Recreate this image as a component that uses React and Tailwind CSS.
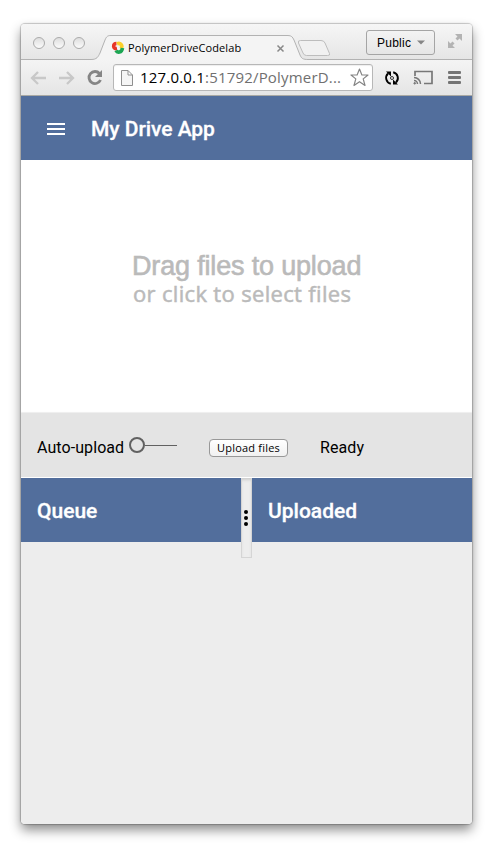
import React from "react";

function TabStrip() {
  return (
    <div className="relative h-9 shrink-0 bg-gradient-to-b from-[#f6f6f6] to-[#e5e5e5]">
      <svg className="absolute left-0 top-0" width="451" height="36" viewBox="0 0 451 36" fill="none">
        <path d="M0 35.5H70C76 35.5 77 33 79 29L84 16C85.500 12.500 86.500 11.500 90 11.500H267C270.500 11.500 271.500 13 273 16L279 31C280.500 34.500 282 35.500 287 35.500H451V36H0Z" fill="#f4f4f4" />
        <path d="M0 35.5H70C76 35.5 77 33 79 29L84 16C85.500 12.500 86.500 11.500 90 11.500H267C270.500 11.500 271.500 13 273 16L279 31C280.500 34.500 282 35.500 287 35.500H451" stroke="#b2b2b2" />
        <path d="M279.500 16.500H300Q303 16.500 304 19L308.500 29.500Q309.500 31.500 306.500 31.500H285.500Q283 31.500 282 29L277.500 19Q276.500 16.500 279.500 16.500Z" fill="#f1f1f1" stroke="#bdbdbd" />
      </svg>
      <div className="relative flex h-9 items-center">
        <div className="ml-3 mt-0.5 flex gap-2">
          <i className="h-3 w-3 rounded-full border border-[#aaa] bg-gradient-to-b from-[#dedede] to-[#fbfbfb]" />
          <i className="h-3 w-3 rounded-full border border-[#aaa] bg-gradient-to-b from-[#dedede] to-[#fbfbfb]" />
          <i className="h-3 w-3 rounded-full border border-[#aaa] bg-gradient-to-b from-[#dedede] to-[#fbfbfb]" />
        </div>
        <svg className="ml-[26px] mt-3 shrink-0" width="14" height="14" viewBox="0 0 14 14" fill="none" strokeWidth="3.600">
          <path d="M5.500 2.500Q2.500 2.500 2.700 5.500Q3 8 6 7.500" stroke="#e73527" />
          <path d="M6 2.800Q9 1.500 10.500 4Q11.500 6 9.500 7.500" stroke="#fbd02c" />
          <path d="M11.500 7Q11 10.500 8.500 11Q6 11.500 5 9.500" stroke="#1ca653" />
        </svg>
        <span className="ml-[3px] mt-3 w-[148px] whitespace-nowrap font-['Open_Sans',sans-serif] text-[11px] font-medium leading-4 tracking-[0.1px] text-black">PolymerDriveCodelab</span>
        <svg className="mt-3 shrink-0" width="9" height="9" viewBox="0 0 9 9"><path d="M1.500 1.500L7.500 7.500M7.500 1.500L1.500 7.500" stroke="#888" strokeWidth="1.500" /></svg>
        <div className="ml-[81px] flex h-[25px] w-[69px] items-center rounded-[3px] border border-[#a5a5a5] bg-gradient-to-b from-[#f3f3f3] to-[#e6e6e6] pl-[10px]">
          <span className="mt-px w-[35px] font-['Liberation_Sans',Arial,sans-serif] text-[12px] leading-4 tracking-[0.25px] text-black">Public</span>
          <svg className="ml-[5px]" width="8" height="5" viewBox="0 0 8 5"><path d="M0 .5H8L4 4.500Z" fill="#858585" /></svg>
        </div>
        <svg className="ml-[12px] -mt-0.5" width="16" height="16" viewBox="0 0 16 16" fill="#b3b3b3">
          <path d="M8 1H15V8L12.500 5.500L10.500 7.500L8.500 5.500L10.500 3.500ZM1 8L3.500 10.500L5.500 8.500L7.500 10.500L5.500 12.500L8 15H1Z" />
        </svg>
      </div>
    </div>
  );
}

function Toolbar() {
  return (
    <div className="flex h-9 shrink-0 items-center border-b border-[#a9a9a4] bg-gradient-to-b from-[#f4f4f4] to-[#e5e5e5]">
      <svg className="ml-[9px] shrink-0" width="75" height="20" viewBox="0 0 75 20" fill="none">
        <path d="M8 4L2 10L8 16M3 10H16" stroke="#c8c8c8" strokeWidth="2.300" />
        <path d="M37 4L43 10L37 16M42 10H29" stroke="#c8c8c8" strokeWidth="2.300" />
        <path d="M69.500 5.500A6 6 0 1 0 70.500 12" stroke="#858585" strokeWidth="2.800" />
        <path d="M72 2V9H65Z" fill="#858585" />
      </svg>
      <div className="ml-[8px] flex h-[27px] w-[260px] shrink-0 items-center rounded-[3px] border border-[#b7b7b7] bg-white shadow-[inset_0_1px_1px_#eee]">
        <svg className="ml-[7px] shrink-0" width="12" height="16" viewBox="0 0 12 16" fill="none">
          <path d="M.5 .5H7L11.500 5V15.500H.5ZM7 .5V5H11.500" fill="#f5f5f5" stroke="#8f8f8f" />
        </svg>
        <span className="-mt-px ml-[7px] w-[208px] whitespace-nowrap font-['Open_Sans',sans-serif] text-[15px] leading-5 tracking-[0.19px] text-[#707070]"><span className="text-black">127.0.0.1</span>:51792/PolymerD...</span>
        <svg className="ml-[2px] shrink-0" width="19" height="19" viewBox="0 0 19 19" fill="white">
          <path d="M9.500 1L11.900 7H18L13.200 10.900L15 17.500L9.500 13.700L4 17.500L5.800 10.900L1 7H7.100Z" stroke="#858585" strokeWidth="1.200" strokeLinejoin="round" />
        </svg>
      </div>
      <svg className="ml-[11px] shrink-0" width="16" height="16" viewBox="0 0 16 16" fill="none">
        <path d="M6.800 13.700A6 6 0 0 1 4 3.500M9.200 2.300A6 6 0 0 1 12 12.500" stroke="#000" strokeWidth="1.900" />
        <path d="M2 1.500H7V6.500ZM9 9.500V14.500H14Z" fill="#000" />
        <circle cx="8" cy="8" r="1.500" stroke="#333" />
      </svg>
      <svg className="ml-[13px] shrink-0" width="21" height="17" viewBox="0 0 21 17" fill="none" stroke="#777">
        <path d="M2 7V2.500H19V14.500H11" strokeWidth="1.700" />
        <path d="M1 8.500A6.500 6.500 0 0 1 7.500 15M1 11.500A3.500 3.500 0 0 1 4.500 15" strokeWidth="1.500" />
        <circle cx="1.700" cy="14.300" r=".8" fill="#777" />
      </svg>
      <div className="ml-[14px] flex flex-col gap-[2px]">
        <i className="h-[3px] w-[13px] rounded-[1px] bg-[#747474]" />
        <i className="h-[3px] w-[13px] rounded-[1px] bg-[#747474]" />
        <i className="h-[3px] w-[13px] rounded-[1px] bg-[#747474]" />
      </div>
    </div>
  );
}

export default function App() {
  return (
    <div className="h-[846px] w-[493px] overflow-hidden bg-white pl-[21px] pt-6 font-[Roboto,sans-serif]">
      <div className="h-[800px] w-[451px] rounded-[4px] shadow-[0_0_1px_1px_rgba(0,0,0,0.2),0_6px_12px_rgba(0,0,0,0.45)]">
        <div className="flex h-full flex-col overflow-hidden rounded-[4px] bg-[#ededed]">
          <TabStrip />
          <Toolbar />
          <header className="flex h-16 shrink-0 items-center bg-[#526e9c]">
            <div className="ml-[26px] mt-0.5 flex flex-col gap-[3px]">
              <i className="h-0.5 w-[18px] bg-white" />
              <i className="h-0.5 w-[18px] bg-white" />
              <i className="h-0.5 w-[18px] bg-white" />
            </div>
            <h1 className="ml-[26px] mt-0.5 whitespace-nowrap text-[21px] font-medium leading-6 tracking-[-0.05px] text-white [-webkit-text-stroke:0.3px_white]">My Drive App</h1>
          </header>
          <main className="h-[253px] shrink-0 bg-white pl-[111px] pt-[92px] text-[#bababa] shadow-[inset_0_-1px_1px_#eee]">
            <p className="whitespace-nowrap font-['Liberation_Sans',Arial,sans-serif] text-[27px] leading-[29px] tracking-[-0.17px] [-webkit-text-stroke:0.6px_#bababa]">Drag files to upload</p>
            <p className="whitespace-nowrap pl-px font-['Open_Sans',sans-serif] text-[22px] font-medium leading-6 tracking-[0.33px] [-webkit-text-stroke:0.5px_#bababa]">or click to select files</p>
          </main>
          <section className="flex h-[65px] shrink-0 items-center border-b border-white bg-[#e4e4e4] pt-1 text-[16px] leading-5 text-black">
            <span className="ml-4 mt-0.5 w-[92px] whitespace-nowrap tracking-[0.08px]">Auto-upload</span>
            <div className="-mt-1 flex items-center">
              <i className="h-4 w-4 rounded-full border-2 border-[#616161]" />
              <i className="h-px w-8 bg-[#616161]" />
            </div>
            <button className="ml-8 mt-0.5 h-[18px] w-[79px] whitespace-nowrap rounded-[4px] border border-[#989898] bg-gradient-to-b from-white to-[#f1f1f1] font-['Open_Sans',sans-serif] text-[11px] font-medium leading-[14px] tracking-[0.2px]">Upload files</button>
            <span className="ml-8 mt-0.5 tracking-[0.08px]">Ready</span>
          </section>
          <section className="flex items-start text-[21px] font-medium leading-6 text-white [-webkit-text-stroke:0.3px_white]">
            <h2 className="flex h-16 w-[220px] items-center bg-[#526e9c] pl-4 pt-0.5">Queue</h2>
            <div className="flex h-20 w-[11px] flex-col items-start gap-[2px] border-x border-b border-[#d5d5d5] bg-[#ededed] pl-0.5 pt-[32px] shadow-[inset_0_3px_3px_-1px_#ccc]">
              <i className="h-1 w-1 rounded-full bg-black" />
              <i className="h-1 w-1 rounded-full bg-black" />
              <i className="h-1 w-1 rounded-full bg-black" />
            </div>
            <h2 className="flex h-16 flex-1 items-center bg-[#526e9c] pl-4 pt-0.5">Uploaded</h2>
          </section>
        </div>
      </div>
    </div>
  );
}
